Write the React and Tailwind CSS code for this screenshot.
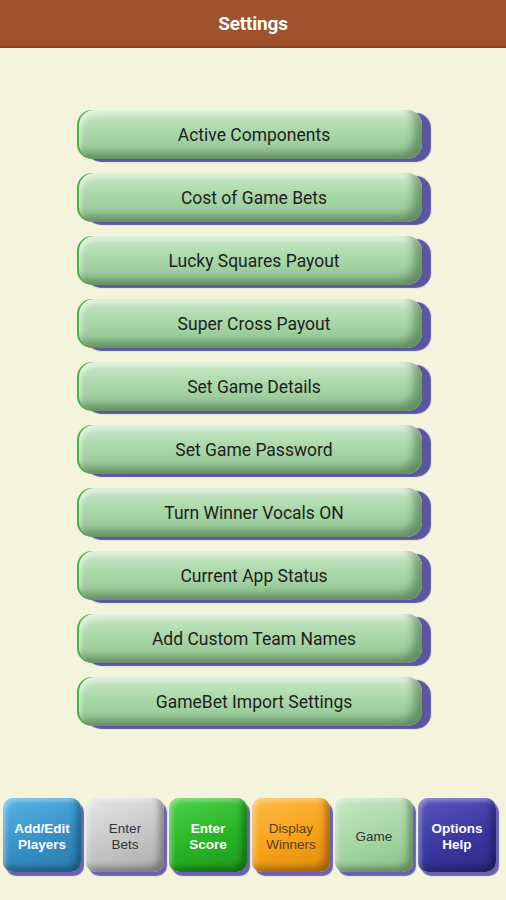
import React from 'react';

const settings = [
  'Active Components',
  'Cost of Game Bets',
  'Lucky Squares Payout',
  'Super Cross Payout',
  'Set Game Details',
  'Set Game Password',
  'Turn Winner Vocals ON',
  'Current App Status',
  'Add Custom Team Names',
  'GameBet Import Settings',
];

// bottom nav tiles, each with its own colour scheme
const tabs = [
  { label: ['Add/Edit', 'Players'], cls: 'bg-[linear-gradient(160deg,#5ab4e4,#3590c6_55%,#2a7cae)] text-white font-bold' },
  { label: ['Enter', 'Bets'], cls: 'bg-[linear-gradient(160deg,#e6e6e6,#c6c6c6_55%,#a9a9a9)] text-[#333]' },
  { label: ['Enter', 'Score'], cls: 'bg-[linear-gradient(160deg,#4ed24a,#27b424_55%,#1c9a1a)] text-white font-bold' },
  { label: ['Display', 'Winners'], cls: 'bg-[linear-gradient(160deg,#ffbb44,#f6a21a_55%,#dc8a0c)] text-[#5a3a10]' },
  { label: ['Game'], cls: 'bg-[linear-gradient(160deg,#c6e8c4,#a4d6a2_55%,#86c084)] text-[#333]' },
  { label: ['Options', 'Help'], cls: 'bg-[linear-gradient(160deg,#5a56c0,#3a37a0_55%,#2c2a86)] text-white font-bold' },
];

export default function App() {
  return (
    <div className="w-[506px] h-[900px] bg-[#f4f4dd] flex flex-col font-['Roboto',sans-serif]">
      <div className="h-[48px] bg-[#a0522d] border-b-2 border-[#8a4424] flex items-center justify-center pt-[3px]">
        <span className="text-white font-bold text-[19px] tracking-[-0.2px]">Settings</span>
      </div>

      <div className="flex flex-col gap-[14px] pt-[62px] pl-[77px]">
        {settings.map((s) => (
          <div
            key={s}
            className="w-[345px] h-[49px] rounded-[15px] flex items-center justify-center pl-[9px] pt-[2px] text-[17.5px] text-[#1e1e1e] bg-[linear-gradient(180deg,#c9e9c9,#a9d8a9_45%,#92c492)] shadow-[inset_2px_0_0_#47b447,inset_-8px_-6px_8px_rgba(40,70,40,0.45),inset_4px_4px_5px_rgba(255,255,255,0.55),9px_3px_1px_#5a56a0]"
          >
            {s}
          </div>
        ))}
      </div>

      <div className="mt-auto flex gap-[5px] pl-[3px] pb-[28px]">
        {tabs.map((t, i) => (
          <div
            key={i}
            className={`w-[78px] h-[74px] rounded-[10px] flex flex-col items-center justify-center pt-[3px] text-[13.5px] leading-[16px] font-['Liberation_Sans',sans-serif] shadow-[inset_-5px_-5px_6px_rgba(0,0,0,0.3),inset_3px_3px_4px_rgba(255,255,255,0.35),3px_4px_1px_#6a62b0] ${t.cls}`}
          >
            {t.label.map((l) => (
              <span key={l}>{l}</span>
            ))}
          </div>
        ))}
      </div>
    </div>
  );
}
